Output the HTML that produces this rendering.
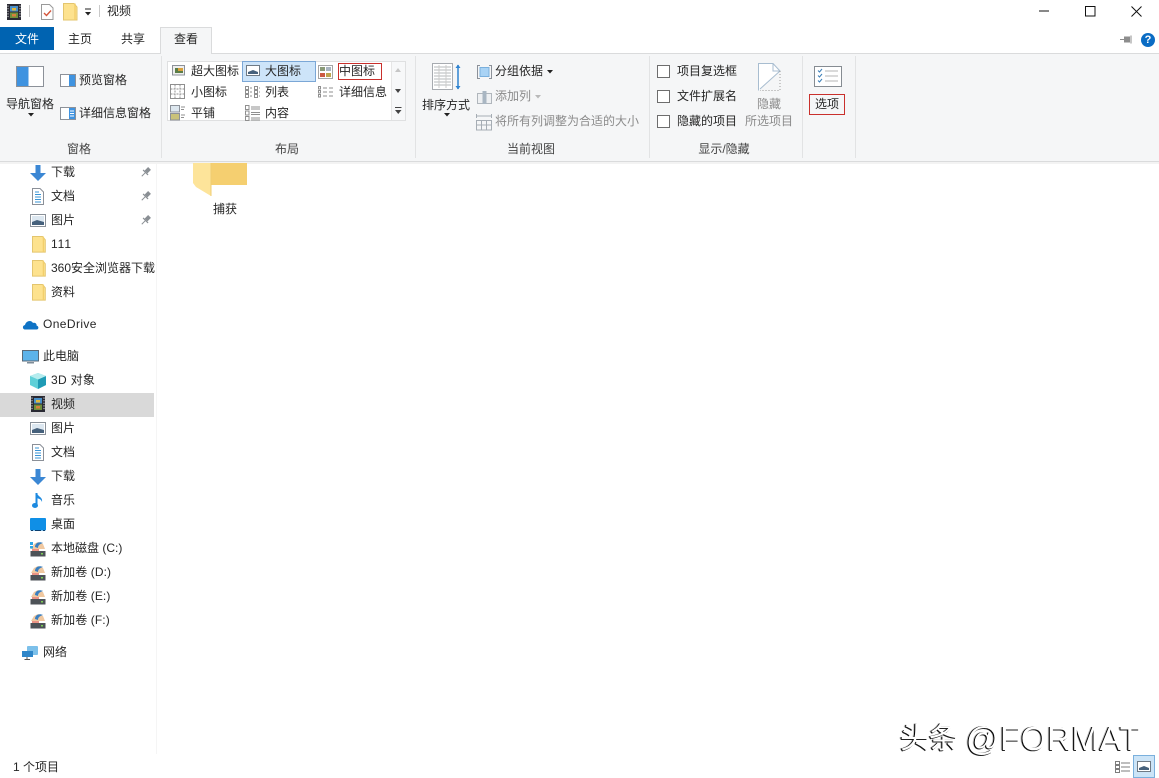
<!DOCTYPE html>
<html lang="zh-CN">
<head>
<meta charset="utf-8">
<title>视频</title>
<style>
html,body{margin:0;padding:0;background:#fff}
#w{position:relative;width:1159px;height:778px;overflow:hidden;background:#fff;font-family:"Liberation Sans","Noto Sans CJK SC",sans-serif;font-size:12px;color:#262626}
.t{position:absolute;height:16px;line-height:16px;white-space:nowrap}
.g{color:#8b8b8b}
.b{position:absolute;box-sizing:border-box}
svg{position:absolute;overflow:visible}
.c{text-align:center}
</style>
</head>
<body>
<div id="w">
<svg width="0" height="0" style="position:absolute">
<defs>
<g id="film"><rect x="0" y="0" width="14" height="16" fill="#2a2a33"/><rect x="3" y="2" width="8" height="5.5" fill="#4a90c8"/><rect x="3" y="8.5" width="8" height="5.5" fill="#6f8f3c"/><rect x="5" y="4" width="4" height="2.5" fill="#e0b93c"/><rect x="5" y="10" width="4" height="2.5" fill="#d87f3c"/><path d="M1 1.5v13M13 1.5v13" stroke="#ddd" stroke-width="1" stroke-dasharray="1.2 1.4"/></g>
<g id="fold"><path d="M.5.5H11L14 4V17H.5Z" fill="#fde28e" stroke="#e3c56e"/><path d="M11 .5V17" stroke="#f2cf6c" stroke-width="1.4" transform="translate(1 0)"/></g>
<g id="down"><path d="M5.5 0H10.5V8H16L8 16 0 8H5.500Z" fill="#3b87d4"/></g>
<g id="doc"><path d="M.5.5H8L11.500 4V16.500H.5Z" fill="#fff" stroke="#8b9098"/><path d="M3 4H7M3 6.500H9M3 9H9M3 11.500H9M3 14H9" stroke="#3a94d6"/></g>
<g id="pic"><rect x=".5" y=".5" width="15" height="12" fill="#fff" stroke="#8a9199"/><rect x="2" y="2" width="12" height="9" fill="#dce7f0"/><path d="M2 8L7 6 14 8V11H2Z" fill="#46617c"/></g>
<g id="pin" transform="translate(6 5) rotate(45)"><rect x="-2" y="-5" width="4" height="5" fill="#8a8f94"/><rect x="-3.500" y="0" width="7" height="1.200" fill="#8a8f94"/><path d="M0 1V6" stroke="#8a8f94"/></g>
<g id="drv"><path d="M1 8L4 3 8 1 13 3 15 8Z" fill="#f0c8a0"/><path d="M5 6C5 2 9 0 13 2 10 3 8 4 8 7Z" fill="#3a7fc0"/><path d="M2 8H9V11H2Z" fill="#e36f5c" opacity=".75"/><rect x="0.500" y="10" width="15" height="5.500" fill="#4d5257"/><rect x="11" y="12" width="2" height="1.500" fill="#7ccf55"/></g>
</defs>
</svg>

<!-- title bar -->
<svg style="left:7px;top:4px" width="14" height="16"><use href="#film"/></svg>
<div class="b" style="left:29px;top:5px;width:1px;height:12px;background:#c9c9c9"></div>
<svg style="left:41px;top:4px" width="13" height="16"><path d="M.5.5H8.500L12 4V15.500H.5Z" fill="#fff" stroke="#9a9a9a"/><path d="M3 9L5.500 11.500 10 6.500" fill="none" stroke="#d4553b" stroke-width="1.400"/></svg>
<svg style="left:63px;top:3px" width="14" height="18"><use href="#fold"/></svg>
<svg style="left:84px;top:8px" width="8" height="9"><path d="M1 1H7" stroke="#222"/><path d="M1 4H7L4 7.500Z" fill="#222"/></svg>
<div class="b" style="left:99px;top:5px;width:1px;height:12px;background:#c9c9c9"></div>
<div class="t" style="left:107px;top:3px">视频</div>
<svg style="left:1039px;top:10px" width="11" height="2"><path d="M0 1H10" stroke="#111"/></svg>
<svg style="left:1085px;top:6px" width="11" height="11"><rect x=".5" y=".5" width="9.500" height="9.500" fill="none" stroke="#111"/></svg>
<svg style="left:1131px;top:6px" width="11" height="11"><path d="M.5.5L10.500 10.500M10.500.5L.5 10.500" stroke="#111"/></svg>

<!-- tabs -->
<div class="b" style="left:0;top:27px;width:54px;height:23px;background:#0063b1"></div>
<div class="t c" style="left:0;top:31px;width:54px;color:#fff">文件</div>
<div class="t" style="left:68px;top:31px">主页</div>
<div class="t" style="left:121px;top:31px">共享</div>
<div class="b" style="left:0;top:53px;width:1159px;height:109px;background:#f5f6f7;border-top:1px solid #dadbdc;border-bottom:1px solid #dadbdc"></div>
<div class="b" style="left:160px;top:27px;width:52px;height:27px;background:#f5f6f7;border:1px solid #dadbdc;border-bottom:none"></div>
<div class="t c" style="left:160px;top:31px;width:52px">查看</div>
<div class="b" style="left:0;top:162px;width:1159px;height:2px;background:#f3f3f3"></div>

<!-- right help -->
<svg style="left:1120px;top:35px" width="13" height="9"><path d="M0 4.500H4" stroke="#8d8d8d"/><rect x="4" y="1.500" width="6" height="6" fill="#8d8d8d"/><path d="M11 .5V8.500" stroke="#8d8d8d"/></svg>
<svg style="left:1141px;top:33px" width="14" height="14"><circle cx="7" cy="7" r="7" fill="#0a6cc4"/></svg>
<div class="t c" style="left:1141px;top:32px;width:14px;color:#fff;font-weight:bold;font-size:11px">?</div>

<!-- ribbon separators -->
<div class="b" style="left:161px;top:56px;width:1px;height:102px;background:#e2e3e4"></div>
<div class="b" style="left:415px;top:56px;width:1px;height:102px;background:#e2e3e4"></div>
<div class="b" style="left:649px;top:56px;width:1px;height:102px;background:#e2e3e4"></div>
<div class="b" style="left:802px;top:56px;width:1px;height:102px;background:#e2e3e4"></div>
<div class="b" style="left:855px;top:56px;width:1px;height:102px;background:#e2e3e4"></div>

<!-- group: panes -->
<svg style="left:16px;top:66px" width="28" height="22"><rect x=".5" y=".5" width="27" height="20" fill="#fff" stroke="#8c9199"/><rect x="1" y="1" width="11.500" height="19" fill="#3f93e0"/></svg>
<div class="t" style="left:6px;top:96px">导航窗格</div>
<svg style="left:28px;top:113px" width="7" height="4"><path d="M0 0H6L3 3.500Z" fill="#222"/></svg>
<svg style="left:60px;top:74px" width="16" height="13"><rect x=".5" y=".5" width="15" height="12" fill="#fff" stroke="#8c9199"/><rect x="9" y="1" width="6" height="11" fill="#3f93e0"/></svg>
<div class="t" style="left:79px;top:72px">预览窗格</div>
<svg style="left:60px;top:107px" width="16" height="13"><rect x=".5" y=".5" width="15" height="12" fill="#fff" stroke="#8c9199"/><rect x="9" y="1" width="6" height="11" fill="#3f93e0"/><path d="M10 4H14M10 6.500H14M10 9H14" stroke="#fff"/></svg>
<div class="t" style="left:79px;top:105px">详细信息窗格</div>
<div class="t c" style="left:49px;top:141px;width:60px;color:#444">窗格</div>

<!-- gallery -->
<div class="b" style="left:167px;top:61px;width:239px;height:60px;background:#fff;border:1px solid #dfe0e1"></div>
<div class="b" style="left:391px;top:62px;width:14px;height:58px;background:#f7f8f9;border-left:1px solid #e6e6e6"></div>
<div class="b" style="left:242px;top:61px;width:74px;height:21px;background:#cde4f9;border:1px solid #7ba7d6"></div>
<div class="b" style="left:338px;top:63px;width:44px;height:17px;border:1px solid #c9302c"></div>
<div style="position:absolute;left:168px;top:62px;width:223px;height:58px;overflow:hidden">
<div class="t" style="left:23px;top:1px">超大图标</div>
<div class="t" style="left:97px;top:1px">大图标</div>
<div class="t" style="left:171px;top:1px">中图标</div>
<div class="t" style="left:23px;top:22px">小图标</div>
<div class="t" style="left:97px;top:22px">列表</div>
<div class="t" style="left:171px;top:22px">详细信息</div>
<div class="t" style="left:23px;top:43px">平铺</div>
<div class="t" style="left:97px;top:43px">内容</div>
</div>
<svg style="left:172px;top:65px" width="13" height="11"><rect x=".5" y=".5" width="12" height="9.500" fill="#eee" stroke="#8c9199"/><rect x="3" y="3" width="8" height="5" fill="#5b7d46"/><rect x="6" y="3" width="5" height="3" fill="#d9a13c"/></svg>
<svg style="left:246px;top:65px" width="14" height="11"><rect x=".5" y=".5" width="13" height="10" fill="#fff" stroke="#6f7a85"/><path d="M2 7L7 5 12 7V9H2Z" fill="#46617c"/></svg>
<svg style="left:318px;top:65px" width="15" height="14"><rect x=".5" y=".5" width="14" height="13" fill="#fff" stroke="#a5a5a5"/><rect x="2" y="2" width="5" height="4" fill="#8a9a78"/><rect x="8" y="2" width="5" height="4" fill="#a8b4c0"/><rect x="2" y="8" width="5" height="4" fill="#cc5a42"/><rect x="8" y="8" width="5" height="4" fill="#bfa54e"/></svg>
<svg style="left:170px;top:84px" width="15" height="15" fill="none" stroke="#8f8f8f"><rect x=".5" y=".5" width="14" height="14"/><path d="M5 .5V14.500M10 .5V14.500M.5 5H14.500M.5 10H14.500" stroke-dasharray="2 1"/></svg>
<svg style="left:245px;top:86px" width="15" height="12" fill="none" stroke="#8f8f8f"><rect x=".5" y=".5" width="3" height="3"/><rect x=".5" y="4.500" width="3" height="3"/><rect x=".5" y="8.500" width="3" height="3"/><rect x="9.500" y=".5" width="3" height="3"/><rect x="9.500" y="4.500" width="3" height="3"/><rect x="9.500" y="8.500" width="3" height="3"/><path d="M5 2H7M5 6H7M5 10H7M14 2H15M14 6H15M14 10H15"/></svg>
<svg style="left:318px;top:86px" width="16" height="12" fill="none" stroke="#8f8f8f"><rect x=".5" y=".5" width="2" height="2.500"/><rect x=".5" y="4.500" width="2" height="2.500"/><rect x=".5" y="8.500" width="2" height="2.500"/><path d="M5 2H9M5 6H9M5 10H9M11 2H15M11 6H15M11 10H15"/></svg>
<svg style="left:170px;top:105px" width="15" height="16"><rect x=".5" y=".5" width="9" height="6.500" fill="#dde7ef" stroke="#8c9199"/><rect x=".5" y="8.500" width="9" height="6.500" fill="#c9c27a" stroke="#8c9199"/><path d="M11 2H15M11 4.500H14M11 10H15M11 12.500H14" stroke="#8f8f8f"/></svg>
<svg style="left:245px;top:105px" width="15" height="16" fill="none" stroke="#8f8f8f"><rect x=".5" y=".5" width="3.500" height="4"/><rect x=".5" y="6" width="3.500" height="4"/><rect x=".5" y="11.500" width="3.500" height="4"/><path d="M6 2H15M6 4H15M6 7.500H15M6 9.500H15M6 13H15M6 15H15"/></svg>
<svg style="left:395px;top:68px" width="7" height="5"><path d="M0 4H6L3 0Z" fill="#c6c6c6"/></svg>
<svg style="left:395px;top:89px" width="7" height="5"><path d="M0 0H6L3 4Z" fill="#444"/></svg>
<svg style="left:395px;top:107px" width="7" height="8"><path d="M0 .5H6.500" stroke="#444"/><path d="M0 3H6.500L3.250 7Z" fill="#444"/></svg>
<div class="t c" style="left:257px;top:141px;width:60px;color:#444">布局</div>

<!-- group: current view -->
<svg style="left:432px;top:63px" width="29" height="28"><rect x=".5" y=".5" width="20" height="26" fill="#fff" stroke="#a7abb0"/><path d="M2 4H19M2 7H19M2 10H19M2 13H19M2 16H19M2 19H19M2 22H19" stroke="#b5b8bb"/><path d="M7 2V25M14 2V25" stroke="#ccc"/><path d="M26 2V26" stroke="#2f83d0" stroke-width="1.500"/><path d="M23.500 5L26 1.500 28.500 5ZM23.500 23L26 26.500 28.500 23Z" fill="#2f83d0"/></svg>
<div class="t" style="left:422px;top:97px">排序方式</div>
<svg style="left:444px;top:113px" width="7" height="4"><path d="M0 0H6L3 3.500Z" fill="#222"/></svg>
<svg style="left:477px;top:65px" width="15" height="14"><path d="M3 .5H.5V13.500H3M12 .5H14.500V13.500H12" fill="none" stroke="#8c9199"/><rect x="3" y="2.500" width="9" height="9" fill="#a9d3f5" stroke="#7ab0dd"/></svg>
<div class="t" style="left:495px;top:63px">分组依据</div>
<svg style="left:547px;top:70px" width="7" height="4"><path d="M0 0H6L3 3.500Z" fill="#222"/></svg>
<svg style="left:477px;top:90px" width="15" height="14"><rect x=".5" y="3.500" width="14" height="10" fill="#eef0f2" stroke="#b0b6bc"/><rect x="5.500" y="1" width="4" height="13" fill="#a9b6c2"/></svg>
<div class="t g" style="left:495px;top:88px">添加列</div>
<svg style="left:535px;top:95px" width="7" height="4"><path d="M0 0H6L3 3.500Z" fill="#b9b9b9"/></svg>
<svg style="left:476px;top:114px" width="16" height="17" fill="none" stroke="#a6adb4"><path d="M.5 0V4M15.500 0V4M1 2H15"/><rect x=".5" y="6.500" width="15" height="9.500"/><path d="M5.500 6.500V16M10.500 6.500V16M.5 11H15.500"/></svg>
<div class="t g" style="left:495px;top:113px">将所有列调整为合适的大小</div>
<div class="t c" style="left:491px;top:141px;width:80px;color:#444">当前视图</div>

<!-- group: show/hide -->
<div class="b" style="left:657px;top:65px;width:13px;height:13px;background:#fff;border:1px solid #6d6d6d"></div>
<div class="b" style="left:657px;top:90px;width:13px;height:13px;background:#fff;border:1px solid #6d6d6d"></div>
<div class="b" style="left:657px;top:115px;width:13px;height:13px;background:#fff;border:1px solid #6d6d6d"></div>
<div class="t" style="left:677px;top:63px">项目复选框</div>
<div class="t" style="left:677px;top:88px">文件扩展名</div>
<div class="t" style="left:677px;top:113px">隐藏的项目</div>
<svg style="left:758px;top:63px" width="23" height="29"><path d="M.5 27.500V.5H15L22 8L2 26" fill="#fff" stroke="#a8bdd0"/><path d="M15 .5V8H22" fill="none" stroke="#a8bdd0"/><path d="M22 8V27.500H2" fill="none" stroke="#9a9a9a" stroke-dasharray="1 2"/></svg>
<div class="t g" style="left:757px;top:96px">隐藏</div>
<div class="t g" style="left:745px;top:113px">所选项目</div>
<div class="t c" style="left:684px;top:141px;width:80px;color:#444">显示/隐藏</div>

<!-- group: options -->
<svg style="left:814px;top:66px" width="28" height="21"><rect x=".5" y=".5" width="27" height="20" fill="#fff" stroke="#868c92"/><path d="M4 4.500L5.500 6 8 3M4 9.500L5.500 11 8 8M4 14.500L5.500 16 8 13" fill="none" stroke="#3c7fb8"/><path d="M11 5H24M11 10H24M11 15H24" stroke="#b4b4b4"/></svg>
<div class="b" style="left:809px;top:94px;width:36px;height:21px;border:1px solid #c9302c"></div>
<div class="t c" style="left:809px;top:96px;width:36px">选项</div>

<!-- nav pane -->
<div class="b" style="left:156px;top:164px;width:1px;height:590px;background:#f5f5f5"></div>
<div class="b" style="left:0;top:393px;width:154px;height:24px;background:#d9d9d9"></div>

<svg style="left:30px;top:165px" width="16" height="16"><use href="#down"/></svg>
<svg style="left:32px;top:188px" width="12" height="17"><use href="#doc"/></svg>
<svg style="left:30px;top:214px" width="16" height="13"><use href="#pic"/></svg>
<svg style="left:32px;top:236px" width="14" height="17"><use href="#fold" transform="scale(.95)"/></svg>
<svg style="left:32px;top:260px" width="14" height="17"><use href="#fold" transform="scale(.95)"/></svg>
<svg style="left:32px;top:284px" width="14" height="17"><use href="#fold" transform="scale(.95)"/></svg>
<svg style="left:140px;top:167px" width="11" height="11"><use href="#pin"/></svg>
<svg style="left:140px;top:191px" width="11" height="11"><use href="#pin"/></svg>
<svg style="left:140px;top:215px" width="11" height="11"><use href="#pin"/></svg>
<svg style="left:22px;top:319px" width="17" height="11"><path d="M3 10.500C.5 10.500 0 6.500 3 6 4 2 9 .5 11 4 14 3 15 6 14.500 6.500 17 7 17 10.500 14.500 10.500Z" fill="#0f73c5"/></svg>
<svg style="left:22px;top:350px" width="17" height="15"><rect x=".5" y=".5" width="16" height="10.500" fill="#5cb3ea" stroke="#5a6a78"/><rect x="5" y="12" width="7" height="1.500" fill="#7e8c98"/></svg>
<svg style="left:30px;top:373px" width="16" height="16"><path d="M8 0L16 3V12L8 16 0 12V3Z" fill="#5fd0d8"/><path d="M8 6.500L16 3V12L8 16Z" fill="#1f9bb5"/><path d="M8 6.500L0 3 8 0 16 3Z" fill="#b5ecee"/></svg>
<svg style="left:31px;top:396px" width="14" height="16"><use href="#film"/></svg>
<svg style="left:30px;top:422px" width="16" height="13"><use href="#pic"/></svg>
<svg style="left:32px;top:444px" width="12" height="17"><use href="#doc"/></svg>
<svg style="left:30px;top:469px" width="16" height="16"><use href="#down"/></svg>
<svg style="left:32px;top:492px" width="13" height="17"><path d="M4.500 1V13" stroke="#1d8ae0" stroke-width="2"/><ellipse cx="3" cy="13.500" rx="3" ry="2.500" fill="#1d8ae0"/><path d="M5 1C6 5 11 5 10 10 9 7 7 7 5 6Z" fill="#1d8ae0"/></svg>
<svg style="left:30px;top:518px" width="16" height="13"><rect x="0" y="0" width="16" height="12.500" rx="1" fill="#0f8fe6"/><path d="M1 12.500H3M5 12.500H11M13 12.500H15" stroke="#0a3f70"/></svg>
<svg style="left:30px;top:541px" width="16" height="16"><use href="#drv"/><rect x="0" y="1" width="3" height="3" fill="#2ea6e6"/><rect x="0" y="5" width="3" height="2.500" fill="#2ea6e6"/></svg>
<svg style="left:30px;top:565px" width="16" height="16"><use href="#drv"/></svg>
<svg style="left:30px;top:589px" width="16" height="16"><use href="#drv"/></svg>
<svg style="left:30px;top:613px" width="16" height="16"><use href="#drv"/></svg>
<svg style="left:22px;top:645px" width="17" height="15"><rect x="5" y="1" width="11" height="9" rx="1" fill="#7cc0ea"/><rect x="0" y="6" width="11" height="6" fill="#2f86c9"/><path d="M5 12V15M2.500 14.500H8" stroke="#555"/></svg>

<div style="position:absolute;left:0;top:164px;width:155px;height:500px;overflow:hidden">
<div class="t" style="left:51px;top:0">下载</div>
<div class="t" style="left:51px;top:24px">文档</div>
<div class="t" style="left:51px;top:48px">图片</div>
<div class="t" style="left:51px;top:72px;letter-spacing:.9px">111</div>
<div class="t" style="left:51px;top:96px">360安全浏览器下载</div>
<div class="t" style="left:51px;top:120px">资料</div>
<div class="t" style="left:43px;top:152px;letter-spacing:.4px">OneDrive</div>
<div class="t" style="left:43px;top:184px">此电脑</div>
<div class="t" style="left:51px;top:208px;letter-spacing:.3px">3D 对象</div>
<div class="t" style="left:51px;top:232px">视频</div>
<div class="t" style="left:51px;top:256px">图片</div>
<div class="t" style="left:51px;top:280px">文档</div>
<div class="t" style="left:51px;top:304px">下载</div>
<div class="t" style="left:51px;top:328px">音乐</div>
<div class="t" style="left:51px;top:352px">桌面</div>
<div class="t" style="left:51px;top:376px">本地磁盘 (C:)</div>
<div class="t" style="left:51px;top:400px;letter-spacing:.1px">新加卷 (D:)</div>
<div class="t" style="left:51px;top:424px;letter-spacing:.1px">新加卷 (E:)</div>
<div class="t" style="left:51px;top:448px;letter-spacing:.1px">新加卷 (F:)</div>
<div class="t" style="left:43px;top:480px">网络</div>
</div>

<!-- content -->
<svg style="left:193px;top:163px" width="55" height="34"><rect x="17" y="0" width="37" height="22" fill="#f5cf70"/><path d="M0 0H18V33L3 24 0 20Z" fill="#fde49a"/><path d="M18 0V33" stroke="#f0cc72"/></svg>
<div class="t c" style="left:195px;top:201px;width:60px">捕获</div>

<!-- status -->
<div class="t" style="left:13px;top:759px">1 个项目</div>
<svg style="left:1115px;top:761px" width="16" height="13" fill="none" stroke="#7d7d7d"><rect x=".5" y=".5" width="4" height="3"/><rect x=".5" y="4.500" width="4" height="3"/><rect x=".5" y="8.500" width="4" height="3"/><path d="M6 2H15M6 6H15M6 10H15"/></svg>
<div class="b" style="left:1133px;top:755px;width:22px;height:23px;background:#cce4f7;border:1px solid #7ab0dd"></div>
<svg style="left:1137px;top:761px" width="14" height="11"><rect x=".5" y=".5" width="13" height="10" fill="#fff" stroke="#6f7a85"/><path d="M2 7L7 5 12 7V9H2Z" fill="#46617c"/></svg>

<!-- watermark -->
<div class="t" style="left:900px;top:722px;height:34px;line-height:34px;font-size:29px;color:#fff;text-shadow:-1px 0 0 #000,-1px 1px 0 #222,-2px 0 0 rgba(0,0,0,.25)">头条</div>
<div class="t" style="left:966px;top:721px;height:36px;line-height:36px;font-size:33px;letter-spacing:.6px;color:#fff;text-shadow:-1px 0 0 #000,-1px 1px 0 #222,-2px 0 0 rgba(0,0,0,.25)">@FORMAT</div>
</div>
</body>
</html>
